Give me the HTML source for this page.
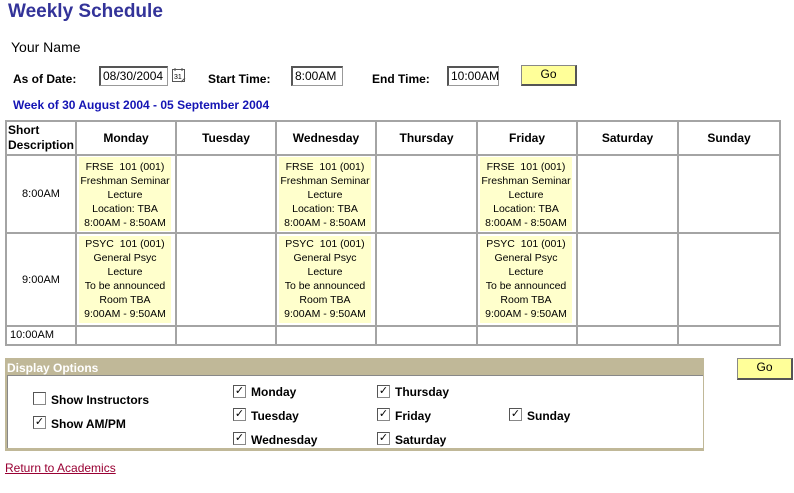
<!DOCTYPE html>
<html><head><style>
body{margin:0;width:794px;height:493px;background:#fff;font-family:"Liberation Sans",Arial,sans-serif;position:relative;overflow:hidden}
.a{position:absolute;white-space:nowrap}
.b{font-weight:bold;font-size:12px}
.inp{position:absolute;border:1px solid #999;border-top:2px solid #555;border-left:2px solid #555;background:#fff;font-size:12px;line-height:16px;padding-left:2px;box-sizing:border-box}
.go{position:absolute;background:#ffff99;border:1px solid #888;border-right:2px solid #555;border-bottom:2px solid #555;box-sizing:border-box;font-size:12px;text-align:center;line-height:17px}
.vl{position:absolute;width:2px;background:#a4a4a4;top:121px;height:225px}
.hl{position:absolute;height:2px;background:#a4a4a4;left:5px;width:776px}
.hd{position:absolute;top:131px;font-weight:bold;font-size:12px;text-align:center}
.ev{position:absolute;background:#ffffcc;font-size:10.5px;line-height:14px;text-align:center;padding-top:3px;box-sizing:border-box;white-space:nowrap;overflow:visible}
.tm{position:absolute;left:7px;width:68px;text-align:center;font-size:11px}
.cb{position:absolute;width:11px;height:11px;border:1px solid #888;border-top-color:#555;border-left-color:#555;background:#fff;font-size:11px;line-height:11px;text-align:center}
</style></head><body>
<div class="a" style="left:8px;top:1px;font-size:19px;font-weight:bold;color:#333399">Weekly Schedule</div>
<div class="a" style="left:11px;top:39px;font-size:14px">Your Name</div>
<div class="a b" style="left:13px;top:72px">As of Date:</div>
<div class="inp" style="left:99px;top:66px;width:69px;height:20px">08/30/2004</div>
<svg class="a" style="left:171px;top:67px" width="16" height="17" viewBox="0 0 16 17"><rect x="1.5" y="2.5" width="12" height="12" fill="#fff" stroke="#555"/><line x1="4" y1="1" x2="4" y2="4" stroke="#555"/><line x1="11" y1="1" x2="11" y2="4" stroke="#555"/><text x="3" y="12" font-size="7" font-family="Liberation Sans">31</text><path d="M10 15 L14 11" stroke="#555"/></svg>
<div class="a b" style="left:208px;top:72px">Start Time:</div>
<div class="inp" style="left:291px;top:66px;width:52px;height:20px">8:00AM</div>
<div class="a b" style="left:372px;top:72px">End Time:</div>
<div class="inp" style="left:447px;top:66px;width:52px;height:20px">10:00AM</div>
<div class="go" style="left:521px;top:65px;width:56px;height:21px">Go</div>
<div class="a b" style="left:13px;top:98px;color:#1414b4">Week of 30 August 2004 - 05 September 2004</div>

<div class="hl" style="top:120px"></div><div class="hl" style="top:154px"></div><div class="hl" style="top:232px"></div><div class="hl" style="top:325px"></div><div class="hl" style="top:344px"></div>
<div class="vl" style="left:5px"></div><div class="vl" style="left:75px"></div><div class="vl" style="left:175px"></div><div class="vl" style="left:275px"></div><div class="vl" style="left:375px"></div><div class="vl" style="left:476px"></div><div class="vl" style="left:576px"></div><div class="vl" style="left:677px"></div><div class="vl" style="left:779px"></div>

<div class="a b" style="left:8px;top:123px;line-height:15px">Short<br>Description</div>
<div class="hd" style="left:77px;width:98px">Monday</div>
<div class="hd" style="left:177px;width:98px">Tuesday</div>
<div class="hd" style="left:277px;width:98px">Wednesday</div>
<div class="hd" style="left:377px;width:99px">Thursday</div>
<div class="hd" style="left:478px;width:98px">Friday</div>
<div class="hd" style="left:578px;width:99px">Saturday</div>
<div class="hd" style="left:679px;width:100px">Sunday</div>

<div class="tm" style="top:188px">8:00AM</div>
<div class="tm" style="top:274px">9:00AM</div>
<div class="tm" style="top:329px;text-align:left;left:10px">10:00AM</div>

<div class="ev" style="left:79px;top:157px;width:92px;height:74px">FRSE&nbsp; 101 (001)<br>Freshman Seminar<br>Lecture<br>Location: TBA<br>8:00AM - 8:50AM</div>
<div class="ev" style="left:279px;top:157px;width:92px;height:74px">FRSE&nbsp; 101 (001)<br>Freshman Seminar<br>Lecture<br>Location: TBA<br>8:00AM - 8:50AM</div>
<div class="ev" style="left:480px;top:157px;width:92px;height:74px">FRSE&nbsp; 101 (001)<br>Freshman Seminar<br>Lecture<br>Location: TBA<br>8:00AM - 8:50AM</div>
<div class="ev" style="left:79px;top:236px;width:92px;height:87px;padding-top:1px">PSYC&nbsp; 101 (001)<br>General Psyc<br>Lecture<br>To be announced<br>Room TBA<br>9:00AM - 9:50AM</div>
<div class="ev" style="left:279px;top:236px;width:92px;height:87px;padding-top:1px">PSYC&nbsp; 101 (001)<br>General Psyc<br>Lecture<br>To be announced<br>Room TBA<br>9:00AM - 9:50AM</div>
<div class="ev" style="left:480px;top:236px;width:92px;height:87px;padding-top:1px">PSYC&nbsp; 101 (001)<br>General Psyc<br>Lecture<br>To be announced<br>Room TBA<br>9:00AM - 9:50AM</div>

<div class="a" style="left:5px;top:358px;width:699px;height:93px;background:#c0b898"></div>
<div class="a b" style="left:7px;top:361px;color:#fff">Display Options</div>
<div class="a" style="left:7px;top:375px;width:695px;height:72px;background:#fff;border-top:1px solid #888;border-left:1px solid #888"></div>

<div class="cb" style="left:33px;top:392px"></div><div class="a b" style="left:51px;top:393px">Show Instructors</div>
<div class="cb" style="left:33px;top:416px">✓</div><div class="a b" style="left:51px;top:417px">Show AM/PM</div>
<div class="cb" style="left:233px;top:385px">✓</div><div class="a b" style="left:251px;top:385px">Monday</div>
<div class="cb" style="left:233px;top:408px">✓</div><div class="a b" style="left:251px;top:409px">Tuesday</div>
<div class="cb" style="left:233px;top:432px">✓</div><div class="a b" style="left:251px;top:433px">Wednesday</div>
<div class="cb" style="left:377px;top:385px">✓</div><div class="a b" style="left:395px;top:385px">Thursday</div>
<div class="cb" style="left:377px;top:408px">✓</div><div class="a b" style="left:395px;top:409px">Friday</div>
<div class="cb" style="left:377px;top:432px">✓</div><div class="a b" style="left:395px;top:433px">Saturday</div>
<div class="cb" style="left:509px;top:408px">✓</div><div class="a b" style="left:527px;top:409px">Sunday</div>

<div class="go" style="left:737px;top:358px;width:56px;height:22px">Go</div>
<div class="a" style="left:5px;top:461px;font-size:12px;color:#990033;text-decoration:underline">Return to Academics</div>
</body></html>
